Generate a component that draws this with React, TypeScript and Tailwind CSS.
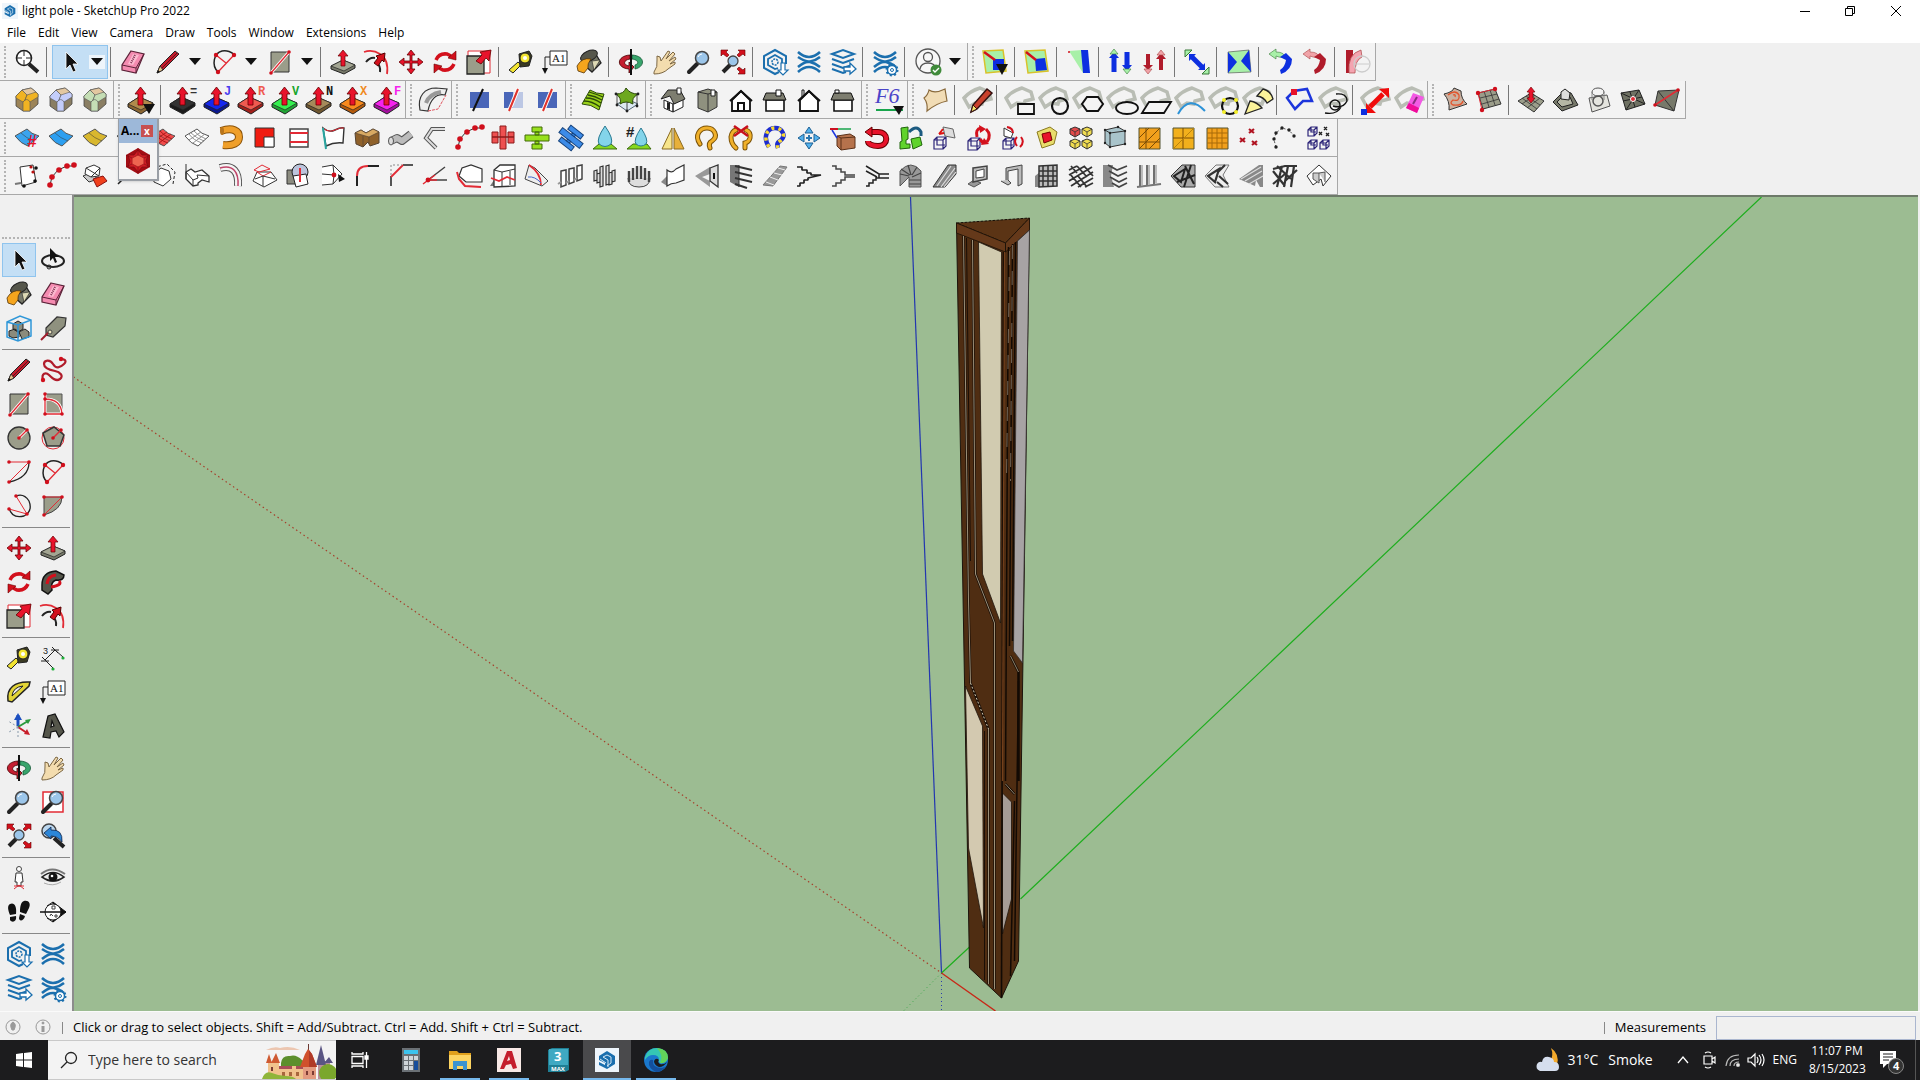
import React from "react";

type IconMap = Record<string, React.ReactNode>;

const Slab = ({ top, side, mark, markColor }: { top: string; side: string; mark?: string; markColor?: string }) => (
  <>
    <path d="M1 18 12 11 26 17 26 20 14 28 1 21Z" fill={side} stroke="#222" />
    <path d="M1 18 12 11 26 17 14 24Z" fill={top} stroke="#222" strokeWidth=".7" />
    <path d="M11 19V8H8L13.500 1 19 8H16V19Z" fill="#e8132b" stroke="#600" strokeWidth=".8" />
    {mark && (
      <text x="21" y="9" fontSize="12" fontWeight="bold" fontFamily="Liberation Mono, monospace" fill={markColor}>
        {mark}
      </text>
    )}
  </>
);

const Lens = () => (
  <>
    <path d="M12 16 4 24" stroke="#222" strokeWidth="4" strokeLinecap="round" />
    <circle cx="17" cy="10" r="6.500" fill="#9cc6ea" stroke="#444" strokeWidth="1.500" />
    <path d="M13 9q1-3 4-3" stroke="#fff" fill="none" />
  </>
);

const Bag = () => (
  <path d="M6 21 1 12Q7 5 17 2L26 6 28 13 20 15 19 18 12 17Z" fill="none" stroke="#b9bdb4" strokeWidth="3.500" />
);

const RoundedCorner = ({ cap, base }: { cap: string; base: string }) => (
  <>
    <path d="M3 10 9 4 18 2 25 8V18L17 25H10L3 20Z" fill={base} stroke="#444" strokeWidth=".8" />
    <path d="M3 10 9 4 14 9 12 14 10 16 3 12Z" fill={cap} stroke="#555" strokeWidth=".6" />
    <path d="M14 9 18 2 25 8V11L17 16 12 14Z" fill={cap} stroke="#555" strokeWidth=".6" />
    <path d="M9 4 18 2 23 6 14 9Z" fill="#e3c7a0" stroke="#555" strokeWidth=".6" />
    <path d="M10 25V16Q14 11 17 16V25Z" fill={cap} stroke="#555" strokeWidth=".6" />
  </>
);

const Sheet = ({ fill, grid }: { fill: string; grid?: string }) => (
  <>
    <path d="M2 12 14 5Q18 10 26 12L15 22Q8 20 2 12Z" fill={fill} stroke="#555" strokeWidth="1" />
    <path d="M8 9Q13 14 21 17" stroke="#333" strokeWidth=".5" fill="none" />
    {grid && <path d="M6 10Q10 16 19 19M11 7Q15 12 23 15M6 16 18 8M10 19 22 10" stroke={grid} fill="none" strokeWidth=".9" />}
  </>
);

const Stack = () => (
  <>
    <path d="M3 6 14 2 25 6 14 10ZM3 11 14 15 25 11M3 16 14 20 23 17M3 21 14 25 17 24" fill="none" stroke="#1b6fae" strokeWidth="2" />
    <path d="M15 19H21V15L27 21 21 26V23H15Z" fill="#fff" stroke="#1b6fae" strokeWidth="1.300" />
  </>
);

const Waves = () => (
  <g fill="none" stroke="#1b6fae" strokeWidth="2.600">
    <path d="M3 4Q14 14 25 4M3 9Q9 13 13 13.500H15Q20 13 25 9M3 19Q9 14 13 14H15Q20 15 25 19M3 24Q14 14 25 24" />
  </g>
);

const Gear = () => (
  <>
    <circle cx="21" cy="22" r="4.500" fill="#fff" stroke="#1b6fae" strokeWidth="1.500" />
    <circle cx="21" cy="22" r="5.500" fill="none" stroke="#1b6fae" strokeWidth="2" strokeDasharray="2 2.300" />
    <circle cx="21" cy="22" r="1.500" fill="#fff" stroke="#1b6fae" />
  </>
);

const House = ({ chimney, door, wide }: { chimney?: string; door?: boolean; wide?: boolean }) =>
  wide ? (
    <>
      <path d="M5 14H23V25H5Z" fill="#fff" stroke="#111" strokeWidth="1.600" />
      <path d="M5 7H22L25 14H2Z" fill="#7e7e70" stroke="#111" />
      {chimney && <path d={chimney} fill="#fff" stroke="#111" />}
    </>
  ) : (
    <>
      {chimney && <path d={chimney} fill="#fff" stroke="#111" />}
      <path d="M5 14 14 5 23 14V25H5Z" fill="#fff" stroke="#111" strokeWidth="1.800" />
      <path d="M3 15 14 5 25 15" fill="none" stroke="#111" strokeWidth="2" />
      {door && <path d="M10 25V16H18V25H16V18H12V25Z" fill="#111" />}
    </>
  );

const Cube = ({ x, y, s = 10 }: { x: number; y: number; s?: number }) => (
  <path
    d={`M${x} ${y + 3}h${s - 3}v${s - 3}h-${s - 3}zl3-3h${s - 3}v${s - 3}l-3 3M${x + s - 3} ${y + 3}l3-3M${x + 3} ${y}v${s - 4}h${s - 4}`}
    fill="none"
    stroke="#2b2378"
    strokeWidth="1.200"
  />
);

const Dots = ({ points, color = "#d00f1c", r = 2.2 }: { points: number[][]; color?: string; r?: number }) => (
  <>
    {points.map(([x, y]) => (
      <circle key={`${x}-${y}`} cx={x} cy={y} r={r} fill={color} />
    ))}
  </>
);

const Swap = () => (
  <>
    <path d="M5 12Q8 5 16 6L20 8M23 16Q20 23 12 22L8 20" stroke="#d3101c" strokeWidth="3.500" />
    <path d="M25 3V12L17 10ZM3 25V16L11 18Z" fill="#d3101c" stroke="#600" strokeWidth=".6" />
  </>
);

const icons: IconMap = {
  find: (
    <>
      <circle cx="11" cy="10" r="7.500" fill="#fff" stroke="#222" strokeWidth="1.600" />
      <path d="M11 2V8M11 12V18M3 10H9M13 10H19" stroke="#222" />
      <path d="M16 16 25 24" stroke="#222" strokeWidth="4" />
    </>
  ),
  select: <path d="M10 4V21L14 17 17 24 20 23 17 16H22Z" fill="#111" stroke="#fff" strokeWidth=".8" />,
  lasso: (
    <>
      <ellipse cx="14" cy="15" rx="11" ry="6" fill="none" stroke="#222" strokeWidth="2" />
      <circle cx="10" cy="21" r="2" fill="none" stroke="#222" />
      <path d="M11 2V15L14 12 16 17 18 16 16 11H20Z" fill="#111" />
    </>
  ),
  eraser: (
    <>
      <path d="M12 3 25 6 17 25 3 22 3 17Z" fill="#f48bb0" stroke="#5c2238" strokeWidth="1.200" />
      <path d="M3 17 17 20 25 6M17 20V25" stroke="#5c2238" fill="none" />
      <path d="M14 6 20 7 14 17 9 16Z" fill="#fbb9cf" />
      <path d="M16 7 12 15" stroke="#7d3250" strokeDasharray="1 1" strokeWidth="2" />
    </>
  ),
  pencil: (
    <>
      <path d="M3 25 6 18 21 3 25 6 9 22Z" fill="#c31c2c" stroke="#222" />
      <path d="M3 25 6 18 9 22Z" fill="#e8c58c" stroke="#222" strokeWidth=".8" />
      <path d="M8 20 23 5" stroke="#61101b" />
      <path d="M3 25 4 22 6 24Z" fill="#111" />
    </>
  ),
  freehand: (
    <>
      <path
        d="M4 24C2 17 7 16 10 19S17 26 21 23 21 16 16 15 5 12 5 8 11 3 14 8 21 12 25 8 24 3 22 3"
        fill="none"
        stroke="#b01c2b"
        strokeWidth="2.200"
      />
      <Dots points={[[4, 24], [22, 3]]} />
    </>
  ),
  arc: (
    <>
      <path d="M8 24C1 17 4 5 12 3 17 2 22 4 24 7" fill="none" stroke="#222" strokeWidth="1.500" />
      <path d="M8 24 24 7M6 7 16 15" stroke="#e22b35" strokeWidth="1.300" />
      <Dots points={[[8, 24], [24, 7], [6, 7]]} />
    </>
  ),
  rect: (
    <>
      <path d="M5 4H23V24H5Z" fill="#9b9d8a" stroke="#333" />
      <path d="M5 25 23 4" stroke="#fff" strokeWidth="3" />
      <path d="M5 25 23 4" stroke="#e22b35" strokeWidth="1.300" />
      <Dots points={[[5, 25], [23, 4]]} r={1.8} />
    </>
  ),
  rotrect: (
    <>
      <path d="M6 4H23V24H6Z" fill="#9b9d8a" stroke="#555" />
      <path d="M6 4V24H23Q22 9 6 9" fill="none" stroke="#fff" strokeWidth="3" />
      <path d="M6 4V24H23Q22 9 6 9" fill="none" stroke="#e22b35" strokeWidth="1.300" />
      <Dots points={[[6, 4], [6, 9], [6, 24], [23, 24]]} r={1.8} />
    </>
  ),
  circle: (
    <>
      <circle cx="14" cy="14" r="11" fill="#9b9d8a" stroke="#333" strokeWidth="1.300" />
      <path d="M14 14 22 6" stroke="#fff" strokeWidth="3" />
      <path d="M14 14 22 6" stroke="#e22b35" strokeWidth="1.300" />
      <Dots points={[[14, 14], [22, 6]]} r={1.8} />
    </>
  ),
  polygon: (
    <>
      <circle cx="14" cy="14" r="11" fill="none" stroke="#e22b35" />
      <path d="M4 9 15 3 25 11 21 22 8 22Z" fill="#9b9d8a" stroke="#333" strokeWidth="1.500" />
      <path d="M14 14 22 6" stroke="#e22b35" strokeWidth="1.500" />
      <Dots points={[[14, 14], [22, 6]]} r={1.8} />
    </>
  ),
  arc2: (
    <>
      <path d="M4 24Q24 20 24 4" fill="none" stroke="#222" strokeWidth="1.300" />
      <path d="M4 24 24 4H4" fill="none" stroke="#e22b35" />
      <Dots points={[[4, 24], [24, 4], [4, 4]]} r={1.8} />
    </>
  ),
  arc3: (
    <>
      <path d="M4 16Q7 27 19 24 28 19 24 9 19 1 11 4" fill="none" stroke="#222" strokeWidth="1.300" />
      <path d="M11 4 22 22 4 17" fill="none" stroke="#e22b35" />
      <Dots points={[[11, 4], [22, 22], [4, 17]]} r={1.8} />
    </>
  ),
  pie: (
    <>
      <path d="M5 5H23Q23 18 5 23Z" fill="#9b9d8a" stroke="#444" />
      <path d="M5 23 23 5H5" fill="none" stroke="#e22b35" />
      <Dots points={[[5, 23], [23, 5], [5, 5]]} r={1.8} />
    </>
  ),
  pushpull: (
    <>
      <path d="M2 18 14 12 26 17V20L15 26 2 21Z" fill="#77796a" stroke="#222" />
      <path d="M2 18 14 12 26 17 15 23Z" fill="#a3a592" stroke="#222" strokeWidth=".7" />
      <path d="M12 18V8H9L14 2 19 8H16V18Z" fill="#e8132b" stroke="#600" strokeWidth=".7" />
    </>
  ),
  offset: (
    <>
      <path d="M1 4C10 1 27 5 24 26" stroke="#e22b35" strokeWidth="1.800" />
      <path d="M3 14Q7 9 12 10M13 14Q18 18 17 24" stroke="#222" strokeWidth="2" />
      <path d="M11 15 15 10 13 8 22 5 21 14 19 12 15 18Z" fill="#d3101c" stroke="#500" />
    </>
  ),
  move: (
    <path
      d="M14 2 18 7H15V13H21V10L26 14 21 18V15H15V21H18L14 26 10 21H13V15H7V18L2 14 7 10V13H13V7H10Z"
      fill="#e8132b"
      stroke="#600"
      strokeWidth=".8"
    />
  ),
  rotate: <Swap />,
  followme: (
    <>
      <path d="M3 17Q3 4 17 3L25 7Q25 13 17 12 11 14 13 22L9 26 3 22Z" fill="#55564b" stroke="#111" strokeWidth="1.500" />
      <path d="M8 16Q9 8 17 7M12 19Q24 17 20 13" fill="none" stroke="#d3101c" strokeWidth="3" />
    </>
  ),
  scale: (
    <>
      <path d="M3 3H25V25H3Z" fill="#fff" stroke="#e22b35" />
      <path d="M2 8H19V26H2Z" fill="#9b9d8a" stroke="#222" strokeWidth="1.300" />
      <path d="M11 13 17 7 15 4 26 2 24 13 21 10 16 16Z" fill="#e8132b" stroke="#600" strokeWidth=".8" />
    </>
  ),
  tape: (
    <>
      <path d="M2 22 11 14 14 17 6 25Z" fill="#f2e432" stroke="#222" />
      <path d="M12 6 22 3 25 8 22 18 13 19Z" fill="#3a3a22" stroke="#222" />
      <circle cx="18" cy="10" r="5" fill="#f2e432" stroke="#222" />
      <circle cx="18" cy="10" r="2" fill="#fff" />
    </>
  ),
  text: (
    <>
      <path d="M9 3H26V17H9Z" fill="#fff" stroke="#222" />
      <path d="M9 9H4V21" fill="none" stroke="#222" />
      <path d="M1 20H7L4 26Z" fill="#111" />
      <text x="11" y="14" fontSize="11" fontFamily="Liberation Serif, serif" fill="#111">A1</text>
    </>
  ),
  dimension: (
    <>
      <path d="M6 16 16 6M6 16 14 24M16 6 24 13M3 13 9 19M13 3 19 9M2 17H10M12 6H20" stroke="#222" />
      <Dots points={[[14, 25], [24, 14]]} color="#1fae3a" r={1.6} />
      <text x="4" y="10" fontSize="9" fontFamily="Liberation Sans, sans-serif" fill="#222">3</text>
    </>
  ),
  paint: (
    <>
      <path d="M8 7 19 3 26 15 17 24 8 16Z" fill="#77796a" stroke="#222" strokeWidth="1.300" />
      <ellipse cx="14" cy="8" rx="9" ry="5" transform="rotate(-25 14 8)" fill="#55564b" stroke="#222" />
      <path d="M17 13 25 12 19 22Z" fill="#ddd9b4" stroke="#222" strokeWidth=".6" />
      <path d="M2 18Q7 9 16 11 12 16 13 20L9 25 3 23Z" fill="#f5a51d" stroke="#54350a" strokeWidth=".8" />
    </>
  ),
  orbit: (
    <>
      <path d="M13 7C-1 8-1 20 12 21V25L17 19 12 14V18C6 17 6 12 13 11Z" fill="#c41e30" stroke="#400" strokeWidth=".8" />
      <path d="M15 7C29 8 28 19 18 21V17C22 16 22 12 15 11Z" fill="#38a56c" stroke="#153" strokeWidth=".8" />
      <path d="M14 1V27" stroke="#111" strokeWidth="2" />
    </>
  ),
  pan: (
    <path
      d="M3 24Q7 19 6 12L6 8 9 9 10 13 17 3 19 4 15 11 22 4 24 6 18 13 24 9 25 11 19 16 24 14V16L17 21Q12 26 3 26Z"
      fill="#f3dcae"
      stroke="#7c6743"
    />
  ),
  zoom: <Lens />,
  zoomwin: (
    <>
      <path d="M4 4H24V24H4Z" fill="#fff" stroke="#e22b35" strokeWidth="1.500" />
      <Lens />
    </>
  ),
  zoomext: (
    <>
      <path d="M11 17 4 24" stroke="#222" strokeWidth="4" />
      <circle cx="14" cy="13" r="5" fill="#9cc6ea" stroke="#444" strokeWidth="1.300" />
      <path d="M2 2H9L7 4 10 7 8 9 4 6 2 8ZM26 2H19L21 4 18 7 20 9 24 6 26 8ZM26 26H19L21 24 18 21 20 19 24 22 26 20Z" fill="#d3101c" stroke="#600" strokeWidth=".6" />
    </>
  ),
  previous: (
    <>
      <circle cx="10" cy="9" r="7" fill="#bcd7ee" stroke="#444" strokeWidth="1.500" />
      <path d="M15 16 25 25" stroke="#222" strokeWidth="4" />
      <path d="M5 11 12 5V8Q24 7 23 20 19 14 12 14V17Z" fill="#2c86d8" stroke="#124" strokeWidth=".8" />
    </>
  ),
  warehouse: (
    <>
      <path d="M18 24 14 26 3 20V8L14 2 25 8V16" fill="none" stroke="#1b6fae" strokeWidth="2" />
      <path d="M17 20 14 21 7 17V11L14 7 21 11V15" fill="none" stroke="#1b6fae" strokeWidth="1.800" />
      <circle cx="14" cy="14" r="3" fill="none" stroke="#1b6fae" strokeWidth="1.500" strokeDasharray="2 1" />
      <path d="M20 15H24V22H27L22 27 17 22H20Z" fill="#fff" stroke="#1b6fae" strokeWidth="1.200" />
    </>
  ),
  waves: <Waves />,
  stack: <Stack />,
  wavesGear: (
    <>
      <Waves />
      <Gear />
    </>
  ),
  account: (
    <>
      <circle cx="14" cy="13" r="12" fill="#f8f8f8" stroke="#555" strokeWidth="1.300" />
      <circle cx="14" cy="9" r="4.500" fill="none" stroke="#555" strokeWidth="1.300" />
      <path d="M6 21Q7 15 14 15T22 21" fill="none" stroke="#555" strokeWidth="1.300" />
      <circle cx="22" cy="22" r="5.500" fill="#3f8a3a" />
      <path d="M19 22 21 24 25 20" stroke="#fff" fill="none" strokeWidth="1.400" />
    </>
  ),
  fredo1: (
    <>
      <path d="M2 3 22 2 25 23 5 25Z" fill="#a8f0a8" stroke="#d8c22a" strokeWidth="1.500" />
      <path d="M12 11H23V22H12Z" fill="#0d2fe0" />
      <path d="M3 4 14 12" stroke="#d3101c" strokeWidth="2.500" />
      <path d="M15 16H27L21 27Z" fill="#111" />
    </>
  ),
  fredo2: (
    <>
      <path d="M2 3 22 2 25 23 5 25Z" fill="#a8f0a8" stroke="#d8c22a" strokeWidth="1.500" />
      <path d="M12 11 22 10 24 22 13 23Z" fill="#0d2fe0" />
      <path d="M3 4 13 12" stroke="#d3101c" strokeWidth="2.500" />
    </>
  ),
  fredo3: (
    <>
      <path d="M4 3 17 2 18 25Z" fill="#a8f0a8" />
      <path d="M16 2H23L25 25H18Z" fill="#0d2fe0" />
      <circle cx="4" cy="4" r="1" fill="#d3101c" />
    </>
  ),
  fredo4: (
    <>
      <path d="M7 10V24M20 4V18" stroke="#0d2fe0" strokeWidth="5" />
      <path d="M2 10 7 4 12 10ZM15 17 20 23 25 17Z" fill="#0d2fe0" />
      <path d="M3 6 7 1 11 6ZM16 21 20 26 24 21Z" fill="#a8f0a8" stroke="#387838" strokeWidth=".6" />
    </>
  ),
  fredo5: (
    <>
      <path d="M7 6V18M20 10V22" stroke="#b01c2b" strokeWidth="4" />
      <path d="M2 17 7 22 12 17ZM15 11 20 5 25 11Z" fill="#b01c2b" />
      <path d="M3 21 7 26 11 21ZM16 7 20 2 24 7Z" fill="#f0a3a8" stroke="#a44" strokeWidth=".6" />
    </>
  ),
  fredo6: (
    <>
      <path d="M8 8 20 20" stroke="#0d2fe0" strokeWidth="5" />
      <path d="M2 2H9L2 9ZM26 26H19L26 19Z" fill="#a8f0a8" stroke="#387838" />
      <path d="M6 6H13L6 13ZM22 22H15L22 15Z" fill="#0d2fe0" />
    </>
  ),
  fredo7: (
    <>
      <path d="M3 4 24 2 26 24 3 25Z" fill="#a8f0a8" stroke="#444" strokeWidth=".6" />
      <path d="M3 4 12 14 3 25ZM24 2 16 13 26 24Z" fill="#0d2fe0" />
    </>
  ),
  fredo8: (
    <>
      <path d="M2 6 9 1V4Q18 4 18 10L12 9 9 8V11Z" fill="#a8f0a8" stroke="#387838" strokeWidth=".6" />
      <path d="M13 9 19 5 25 11Q25 22 14 26L13 22Q18 19 19 12Z" fill="#0d2fe0" />
    </>
  ),
  fredo9: (
    <>
      <path d="M2 6 9 1V4Q18 4 18 10L12 9 9 8V11Z" fill="#f0a3a8" stroke="#a44" strokeWidth=".6" />
      <path d="M13 9 19 5 25 11Q25 22 14 26L13 22Q18 19 19 12Z" fill="#b01c2b" />
    </>
  ),
  fredo10: (
    <>
      <path d="M3 2H10V25H3Z" fill="#b01c2b" />
      <path d="M6 25Q4 6 18 2L19 9Q12 12 12 25Z" fill="#f4a4b0" stroke="#a44" strokeWidth=".7" />
      <circle cx="19" cy="16" r="8" fill="none" stroke="#ccc" strokeWidth="1.300" />
      <path d="M12 16H26" stroke="#ccc" />
    </>
  ),
  cornerGold: <RoundedCorner cap="#f0b323" base="#9c8458" />,
  cornerBlue: <RoundedCorner cap="#c4cdfa" base="#8a7e63" />,
  cornerGreen: <RoundedCorner cap="#c5deb5" base="#8a7e63" />,
  jpp: (
    <>
      <Slab top="#b08a4c" side="#8a6633" />
      <path d="M16 18H28L22 28Z" fill="#111" />
    </>
  ),
  jppE: <Slab top="#333" side="#1b1b1b" mark="=" markColor="#333" />,
  jppJ: <Slab top="#1527f0" side="#0b1890" mark="J" markColor="#4a3ff0" />,
  jppR: <Slab top="#ef5a50" side="#a3201a" mark="R" markColor="#ef5a50" />,
  jppV: <Slab top="#35f050" side="#21a535" mark="V" markColor="#18a52c" />,
  jppN: <Slab top="#a58a5a" side="#6f5730" mark="N" markColor="#111" />,
  jppX: <Slab top="#f98a1d" side="#b55a0b" mark="X" markColor="#f08a1d" />,
  jppF: <Slab top="#f622ee" side="#a40f9f" mark="F" markColor="#f622ee" />,
  shell: (
    <>
      <path d="M1 24C-2 10 6 2 17 2L28 3 26 9C17 7 11 14 9 25Z" fill="#eee" stroke="#333" strokeWidth="1.200" />
      <path d="M7 17Q10 8 22 6" stroke="#999" fill="none" strokeWidth="4" />
      <path d="M9 25 19 23 27 9" stroke="#e0555f" fill="none" strokeDasharray="3 1" />
    </>
  ),
  mirror1: (
    <>
      <path d="M5 6H24V22H5Z" fill="#4a66b8" />
      <path d="M8 25 18 3" stroke="#111" strokeWidth="2" />
    </>
  ),
  mirror2: (
    <>
      <path d="M5 6H14V22H5Z" fill="#4a66b8" />
      <path d="M14 6H24V22H14Z" fill="#bcc7e4" />
      <path d="M10 25 19 3" stroke="#fff" strokeWidth="4" />
      <path d="M10 25 19 3" stroke="#e0322c" strokeWidth="2" />
    </>
  ),
  mirror3: (
    <>
      <path d="M5 6H24V22H5Z" fill="#4a66b8" />
      <path d="M10 25 19 3" stroke="#fff" strokeWidth="4" />
      <path d="M10 25 19 3" stroke="#e0322c" strokeWidth="2" />
    </>
  ),
  curviloft: (
    <>
      <path d="M3 18 11 4Q17 8 25 8L20 24Q12 18 3 18Z" fill="#9ad21a" stroke="#2b4a08" />
      <path d="M5 15Q13 15 21 21M7 12Q15 12 22 17M9 9Q16 10 23 14M10 6Q17 8 24 11" stroke="#2b4a08" strokeWidth="1.300" fill="none" />
    </>
  ),
  skinning: (
    <>
      <path d="M4 18 14 25 25 18 14 13Z" fill="#dce9f2" stroke="#567" />
      <path d="M3 8Q11 8 13 2 17 8 25 8 18 12 20 18 13 14 7 18 9 12 3 8Z" fill="#6da81e" stroke="#2b4a08" />
      <path d="M4 8V19M24 8V20M14 16V25" stroke="#222" strokeWidth=".8" />
      <Dots points={[[4, 19], [24, 20], [14, 25], [3, 8], [25, 8]]} color="#222" r={1.4} />
    </>
  ),
  iso: (
    <>
      <path d="M5 14 14 18V26L5 22ZM14 18 24 13V21L14 26Z" fill="#fff" stroke="#222" />
      <path d="M2 13 9 4 21 4 26 13 15 18 11 10Z" fill="#7e7e70" stroke="#222" />
      <path d="M18 2H22V8H18Z" fill="#fff" stroke="#222" />
      <path d="M8 16 11 17V24L8 23Z" fill="#222" />
    </>
  ),
  top: (
    <>
      <path d="M5 6 15 3 24 6V21L15 26 5 22Z" fill="#8f917f" stroke="#333" />
      <path d="M5 6 15 8V26M15 8 24 6" stroke="#333" fill="none" />
      <path d="M18 4H22V10H18Z" fill="#fff" stroke="#222" />
    </>
  ),
  front: <House door />,
  right: <House wide chimney="M15 4H20V10H15Z" />,
  back: <House chimney="M7 4H9V12H7Z" />,
  left: <House wide chimney="M6 4H10V7H6Z" />,
  f6: (
    <>
      <text x="0" y="17" fontSize="22" fontStyle="italic" fontFamily="Liberation Serif, serif" fill="#4a44c8">F6</text>
      <path d="M1 24H28" stroke="#18a54c" strokeWidth="2" />
      <path d="M18 20H29L24 29Z" fill="#111" />
    </>
  ),
  skin: <path d="M3 12Q7 9 8 4 14 8 24 3L26 15Q16 17 6 25 7 17 3 12Z" fill="#f1dcb5" stroke="#8a6a3c" strokeWidth="1.200" />,
  bagPencil: (
    <>
      <Bag />
      <path d="M8 26 10 19 24 3 29 7 14 23Z" fill="#c9402c" stroke="#311" strokeWidth="1.500" />
      <path d="M8 26 10 19 14 23Z" fill="#fbe46b" stroke="#311" />
    </>
  ),
  bagRect: (<><Bag /><path d="M13 18H29V28H13Z" fill="#f4f4f4" stroke="#111" strokeWidth="1.800" /></>),
  bagCircle: (<><Bag /><circle cx="21" cy="20" r="8" fill="none" stroke="#111" strokeWidth="2.200" /></>),
  bagHex: (<><Bag /><path d="M14 11H25L30 18 25 25H14L9 18Z" fill="#f4f4f4" stroke="#111" strokeWidth="2" /></>),
  bagEllipse: (<><Bag /><ellipse cx="20" cy="22" rx="11" ry="6" fill="#f4f4f4" stroke="#111" strokeWidth="1.800" /></>),
  bagPara: (<><Bag /><path d="M8 16H30L23 27H1Z" fill="#f4f4f4" stroke="#111" strokeWidth="1.800" /></>),
  bagArc: (<><Bag /><path d="M3 28Q14 8 30 25" fill="none" stroke="#2d93d8" strokeWidth="2" /></>),
  bagCircle2: (
    <>
      <Bag />
      <circle cx="21" cy="20" r="8" fill="none" stroke="#111" strokeWidth="2.200" />
      <Dots points={[[15, 14], [27, 14], [15, 26], [27, 26]]} color="#f5f02a" r={2} />
    </>
  ),
  bagPie: (
    <>
      <Bag />
      <path d="M2 28 7 15Q14 16 19 22ZM14 10 20 3Q28 5 30 13L24 17Q21 11 14 10Z" fill="#fbf39a" stroke="#222" strokeWidth="1.300" />
    </>
  ),
  bagBlue: (
    <>
      <path d="M2 12 9 5 22 3 27 15 18 15 10 23Z" fill="none" stroke="#1c35dc" strokeWidth="2.500" />
      <path d="M6 3H12V9H6Z" fill="#e8132b" />
    </>
  ),
  bagLoops: (
    <>
      <Bag />
      <circle cx="16" cy="19" r="5" fill="none" stroke="#111" strokeWidth="1.400" />
      <path d="M17 8Q28 7 28 15 24 23 14 20M6 27Q18 29 22 21" fill="none" stroke="#111" strokeWidth="1.400" />
    </>
  ),
  bagArrow: (
    <>
      <Bag />
      <path d="M9 21 22 8" stroke="#f00c0c" strokeWidth="5" />
      <path d="M5 27V17L15 27ZM28 2V12L18 3Z" fill="#f00c0c" />
      <path d="M0 23H6V29H0Z" fill="#0d2fe0" />
    </>
  ),
  bagErase: (
    <>
      <Bag />
      <path d="M18 7 29 11 22 27 11 22Z" fill="#f35ae4" />
      <path d="M14 17 24 22 22 27 11 22Z" fill="#f00c98" />
      <path d="M22 11 18 18" stroke="#8a2c80" strokeWidth="2" />
    </>
  ),
  contours: (
    <>
      <path d="M3 8Q12 6 13 2L20 5Q20 13 26 18L8 24Q9 15 3 8Z" fill="#cbb1a0" stroke="#333" />
      <path d="M7 9Q14 3 18 9 19 16 12 14 8 17 12 19 21 20 22 15M12 9Q15 8 14 11" fill="none" stroke="#e2542c" strokeWidth="1.300" />
    </>
  ),
  scratch: (
    <>
      <path d="M3 7 20 3 26 18 8 23Z" fill="#9b9d8a" stroke="#333" />
      <path d="M5 12 22 8M7 18 24 13M9 5 14 21M15 4 20 19" stroke="#333" strokeWidth=".8" />
      <path d="M20 3 3 7 7 24" stroke="#e22b35" fill="none" />
      <Dots points={[[3, 7], [20, 3], [7, 24]]} />
    </>
  ),
  smoove: (
    <>
      <path d="M1 15 14 7 27 15 17 26Z" fill="#9b9d8a" stroke="#333" />
      <path d="M5 12 20 23M9 10 23 19M5 18 18 9M10 22 23 12" stroke="#333" strokeWidth=".8" />
      <path d="M14 1 18 6H16V12H18L14 17 10 12H12V6H10Z" fill="#e8132b" stroke="#600" strokeWidth=".6" />
    </>
  ),
  stamp: (
    <>
      <path d="M2 16 13 5 20 7 27 19 11 25Z" fill="#77796a" stroke="#222" />
      <path d="M6 16 13 9 19 11 22 18 11 21Z" fill="#b5b7a5" stroke="#222" />
      <path d="M10 6 14 3 19 7 18 14 10 13Z" fill="#ddd" stroke="#222" />
    </>
  ),
  drape: (
    <>
      <path d="M4 12 22 9 25 20 7 26Z" fill="#e4e4de" stroke="#555" />
      <ellipse cx="13" cy="6" rx="6" ry="4" fill="none" stroke="#555" />
      <circle cx="13" cy="15" r="5" fill="none" stroke="#555" strokeWidth="1.500" />
      <path d="M7 6V14M19 6V14" stroke="#888" />
    </>
  ),
  detail: (
    <>
      <path d="M2 7 20 4 26 18 7 24Z" fill="#6f7163" stroke="#222" />
      <path d="M2 7 26 18M20 4 7 24M11 6 16 21M4 15 23 11" stroke="#222" />
      <circle cx="14" cy="13" r="2.500" fill="#e22b35" stroke="#fff" />
    </>
  ),
  flip: (
    <>
      <path d="M5 5 26 4 21 25 2 19Z" fill="#77796a" stroke="#333" />
      <path d="M5 5 21 25" stroke="#333" />
      <path d="M2 19 25 4" stroke="#e22b35" strokeWidth="1.500" />
      <Dots points={[[2, 19], [25, 4]]} r={1.8} />
    </>
  ),
  sheetHash: (
    <>
      <Sheet fill="#3ba4ee" />
      <text x="14" y="23" fontSize="17" fontWeight="bold" fontStyle="italic" fontFamily="Liberation Sans, sans-serif" fill="#e8132b">#</text>
    </>
  ),
  sheetBlue: <Sheet fill="#2d9ff0" />,
  sheetGold: <Sheet fill="#d8b72e" />,
  sheetRed: <Sheet fill="#f04c4c" grid="#a11" />,
  sheetWhite: <Sheet fill="#fff" grid="#888" />,
  pipeGold: (
    <>
      <path d="M4 7C16 3 22 7 22 13S16 22 6 21" fill="none" stroke="#8a5208" strokeWidth="8" />
      <path d="M4 7C16 3 22 7 22 13S16 22 6 21" fill="none" stroke="#ef9f2a" strokeWidth="6" />
      <ellipse cx="5" cy="7" rx="2" ry="4" fill="#b8751c" />
    </>
  ),
  quad: (
    <>
      <path d="M4 4H23V23H4Z" fill="#f01c10" stroke="#333" />
      <path d="M13 13H23V23H13Z" fill="#fff" stroke="#333" />
    </>
  ),
  stripes: (
    <>
      <path d="M5 5H23V23H5Z" fill="#fff" stroke="#444" strokeWidth="1.500" />
      <path d="M5 9H23M5 18H23" stroke="#e22b35" strokeWidth="2" />
    </>
  ),
  flag: (
    <>
      <path d="M4 4Q10 9 16 6T25 4L24 19Q15 18 7 22Z" fill="#fff" stroke="#333" strokeWidth="1.400" />
      <path d="M4 4Q10 9 16 6T25 4" stroke="#e22b35" />
      <path d="M4 4 7 25" stroke="#29a5a0" strokeWidth="2" />
    </>
  ),
  woodL: (
    <>
      <path d="M2 9 8 6 13 9 20 5 26 8V19L17 22 15 18 10 23 3 20Z" fill="#8f612a" stroke="#543" />
      <path d="M2 9 8 6 13 9 20 5 26 8 16 13 9 11Z" fill="#d8a962" stroke="#543" strokeWidth=".7" />
      <path d="M10 12V23M16 13V20" stroke="#543" strokeWidth=".7" />
    </>
  ),
  tubeGrey: (
    <>
      <path d="M4 17 10 14 15 17 24 10" fill="none" stroke="#555" strokeWidth="8" strokeLinejoin="round" />
      <path d="M4 17 10 14 15 17 24 10" fill="none" stroke="#bbb" strokeWidth="6" strokeLinejoin="round" />
      <ellipse cx="4" cy="17" rx="2.500" ry="4" fill="#ddd" stroke="#555" />
    </>
  ),
  channel: (
    <>
      <path d="M24 5H11L5 14 15 24" fill="none" stroke="#555" strokeWidth="4" />
      <path d="M24 5H11L5 14 15 24" fill="none" stroke="#ddd" strokeWidth="2" />
    </>
  ),
  arcDots: (
    <>
      <path d="M3 23 5 15 11 8 20 4 26 4" fill="none" stroke="#333" />
      <Dots points={[[3, 23], [5, 15], [12, 8], [20, 4], [27, 3]]} r={2.8} />
    </>
  ),
  crossRed: (
    <>
      <path d="M11 2H17V25H11Z" fill="#ee5050" stroke="#8c1a1a" />
      <path d="M3 8H9V19H3ZM19 8H25V19H19Z" fill="#ee5050" stroke="#8c1a1a" />
      <path d="M3 13H25" stroke="#8c1a1a" strokeWidth="1.500" />
    </>
  ),
  crossGreen: <path d="M9 3H19V8H9ZM9 20H19V25H9ZM2 11H26V17H2ZM12 8H16V11H12ZM12 17H16V20H12Z" fill="#98e01e" stroke="#426a08" />,
  crossBlue: (
    <g transform="rotate(38 14 14)" fill="#3c8be8" stroke="#15427c">
      <path d="M6 4H22V9H6ZM1 11H27V17H1ZM6 19H22V24H6Z" />
      <path d="M12 9H16V11H12ZM12 17H16V19H12Z" />
    </g>
  ),
  drop: (
    <>
      <path d="M2 25 8 20H20L26 25Z" fill="#86d820" stroke="#3d6a0c" />
      <path d="M14 2Q23 15 20 20 14 25 8 20 5 15 14 2Z" fill="#83d4ea" stroke="#2a7a92" />
    </>
  ),
  dropHash: (
    <>
      <path d="M2 25 8 20H22L26 25Z" fill="#86d820" stroke="#3d6a0c" />
      <path d="M16 4Q24 16 21 20 16 24 11 20 8 16 16 4Z" fill="#83d4ea" stroke="#2a7a92" />
      <text x="1" y="13" fontSize="15" fontWeight="bold" fontFamily="Liberation Sans, sans-serif" fill="#222">#</text>
    </>
  ),
  pyramids: (
    <>
      <path d="M3 25 13 4V25Z" fill="#f7e48a" stroke="#8a6a20" />
      <path d="M15 4V25H25Z" fill="#e8b03a" stroke="#8a6a20" />
    </>
  ),
  loop: (
    <>
      <path d="M7 20C1 11 7 4 14 4S26 12 19 17Q15 19 17 24" fill="none" stroke="#7a5208" strokeWidth="5" strokeLinecap="round" />
      <path d="M7 20C1 11 7 4 14 4S26 12 19 17Q15 19 17 24" fill="none" stroke="#f0b02a" strokeWidth="3" strokeLinecap="round" />
    </>
  ),
  loopX: (
    <>
      <path d="M9 24Q4 20 4 13 5 7 9 6M19 6Q24 8 23 14 22 18 18 19V24" fill="none" stroke="#7a5208" strokeWidth="5" strokeLinecap="round" />
      <path d="M9 24Q4 20 4 13 5 7 9 6M19 6Q24 8 23 14 22 18 18 19V24" fill="none" stroke="#f0b02a" strokeWidth="3" strokeLinecap="round" />
      <path d="M7 2 21 12M21 2 7 12" stroke="#c8101c" strokeWidth="2.500" />
    </>
  ),
  loopBlue: (
    <>
      <path d="M8 23C1 12 7 4 14 4S26 12 19 17Q15 19 17 24" fill="none" stroke="#1c2ccf" strokeWidth="4.500" />
      <path d="M8 23C1 12 7 4 14 4S26 12 19 17Q15 19 17 24" fill="none" stroke="#f8d832" strokeWidth="3.500" strokeDasharray="3 4" />
    </>
  ),
  moveBlue: (
    <>
      <path d="M14 3 18 9H10ZM14 25 18 19H10ZM3 14 9 10V18ZM25 14 19 10V18Z" fill="#52b2ee" stroke="#1d5f92" />
      <path d="M14 11V17M11 14H17" stroke="#2b78b0" strokeWidth="2" />
    </>
  ),
  woodBox: (
    <>
      <path d="M8 12 21 10 26 13V24L12 26 8 22Z" fill="#b5724c" stroke="#5a3018" />
      <path d="M8 12 12 14 26 13M12 14V26" stroke="#5a3018" fill="none" />
      <path d="M3 6 8 14" stroke="#1c35dc" strokeWidth="1.500" />
      <path d="M8 5H22" stroke="#18a54c" strokeWidth="1.500" />
      <path d="M1 5H9" stroke="#c12" strokeWidth="2" />
    </>
  ),
  hook: (
    <>
      <path d="M8 8H15C26 8 26 22 15 22 9 22 5 20 5 17" fill="none" stroke="#600" strokeWidth="6" />
      <path d="M8 8H15C26 8 26 22 15 22 9 22 5 20 5 17" fill="none" stroke="#e8132b" strokeWidth="4" />
      <path d="M9 3V13L2 8Z" fill="#e8132b" stroke="#600" />
    </>
  ),
  greenBoxes: (
    <>
      <path d="M4 4 11 3V15L9 16V20H13V24L3 25V18L5 17Z" fill="#5fd32c" stroke="#20640c" />
      <path d="M14 15 23 13 25 21 16 25Z" fill="#5fd32c" stroke="#20640c" />
      <path d="M12 8Q20 0 24 8V12" fill="none" stroke="#1b5a80" strokeWidth="3" />
    </>
  ),
  cubePaste: (<><Cube x={3} y={13} s={12} /><path d="M12 3 22 5 24 14 14 12Z" fill="#ddd" stroke="#666" /><path d="M8 10 12 5M8 10 13 9" stroke="#d11" strokeWidth="2" /></>),
  cubeRotate: (
    <>
      <Cube x={3} y={14} s={12} />
      <path d="M12 13Q10 5 16 4M22 18Q27 11 21 5M18 19 15 15" fill="none" stroke="#d3101c" strokeWidth="3" />
      <path d="M14 1 21 5 15 9ZM24 20 16 21 19 14Z" fill="#d3101c" />
    </>
  ),
  cubeRotate2: (
    <>
      <Cube x={4} y={14} s={11} />
      <path d="M5 4 14 9 12 14 5 12Z" fill="#fff" stroke="#333" />
      <path d="M8 3Q14 4 14 9M18 13Q14 17 18 22M22 13Q26 18 21 23" fill="none" stroke="#d3101c" strokeWidth="2" />
    </>
  ),
  goldBlock: (
    <>
      <path d="M4 8 17 3 24 8 21 20 9 24Z" fill="#e8dc6c" stroke="#8a7a20" />
      <path d="M9 10 17 8 19 16 11 19Z" fill="#e8132b" stroke="#700" />
    </>
  ),
  fourCubes: (
    <>
      {[[8, 8], [20, 8], [8, 20], [20, 20]].map(([x, y], i) => (
        <g key={i}>
          <path d={`M${x} ${y - 5}l5 2v5l-5 3l-5-3v-5z`} fill={i === 0 ? "#e24a4a" : "#f0dc50"} stroke="#333" />
          <path d={`M${x - 5} ${y - 3}l5 3l5-3M${x} ${y}v5`} stroke="#333" fill="none" strokeWidth=".8" />
        </g>
      ))}
    </>
  ),
  glass: (
    <>
      <path d="M4 6 17 3 24 7V20L9 23 4 19Z" fill="#a9c4cb" stroke="#333" />
      <path d="M4 6 9 9 24 7M9 9V23" fill="none" stroke="#333" />
      <Dots points={[[4, 6], [17, 3], [24, 7], [24, 20], [9, 23], [4, 19], [9, 9]]} color="#222" r={1.2} />
    </>
  ),
  tileDiag: (<><path d="M4 4H25V25H4Z" fill="#f2a01c" stroke="#553" /><path d="M4 14 14 4M4 25 25 4M14 25 25 14M4 18H25M11 4V25" stroke="#7a4c04" /></>),
  tile4: (<><path d="M4 4H25V25H4Z" fill="#f2b01c" stroke="#553" /><path d="M14 4V25M4 14H25" stroke="#7a4c04" /><path d="M4 25 25 4" stroke="#b8820c" /></>),
  tileGrid: (<><path d="M4 4H25V25H4Z" fill="#f2a01c" stroke="#553" /><path d="M9 4V25M14 4V25M19 4V25M4 9H25M4 14H25M4 19H25" stroke="#a86a08" /></>),
  crosses: <path d="M12 5 17 9M17 5 12 9M3 14 8 18M8 14 3 18M15 17 20 21M20 17 15 21" stroke="#b01220" strokeWidth="2.200" />,
  arcSquares: (
    <>
      <path d="M5 23 3 16 5 9 11 4 18 6 23 12" fill="none" stroke="#555" strokeDasharray="2 2" />
      <Dots points={[[5, 23], [3, 15], [5, 9], [11, 4], [18, 6], [23, 12]]} color="#222" r={1.7} />
    </>
  ),
  cubes3: (
    <>
      <Cube x={3} y={3} s={9} />
      <Cube x={3} y={16} s={9} />
      <Cube x={15} y={16} s={9} />
      <path d="M19 3 22 6M22 3 19 6M14 8 17 11M17 8 14 11M21 9 24 12M24 9 21 12" stroke="#222" strokeWidth="1.400" />
    </>
  ),
  paper: (
    <>
      <path d="M7 5 20 3 23 20 9 24Z" fill="#fff" stroke="#333" />
      <path d="M2 22 8 21" stroke="#777" strokeWidth="2" />
      <Dots points={[[18, 5], [20, 10]]} color="#b11" r={1.6} />
      <Dots points={[[11, 24], [22, 19], [23, 6]]} color="#111" r={1.8} />
    </>
  ),
  boxRed: (
    <>
      <path d="M2 14 9 11 17 17 8 20Z" fill="#ccc" stroke="#333" />
      <path d="M5 6 13 3 19 6 18 14 10 15 4 12ZM5 6 18 14M19 6 10 15" fill="#fff" stroke="#333" />
      <path d="M12 17 22 14 26 19 16 25Z" fill="#f0401c" stroke="#811" />
    </>
  ),
  lineOnly: <path d="M3 22 14 11 25 8" stroke="#222" strokeWidth="1.500" fill="none" />,
  hexDash: (<><path d="M4 12 12 6 20 9 22 17 14 24 5 20Z" fill="#fff" stroke="#333" /><path d="M4 6 18 2 26 10 24 22" fill="none" stroke="#222" strokeDasharray="3 2" /></>),
  slabArrow: (<><path d="M3 10 8 7 12 10 19 8 26 14V20L19 18 15 21V23L10 24 3 17Z" fill="#fff" stroke="#333" strokeWidth="1.300" /><path d="M3 2V17M3 10 10 18 15 16 14 13 26 14M10 18V24" stroke="#333" /></>),
  bend: (<><path d="M3 6C16 2 22 10 21 24" stroke="#555" strokeWidth="8" /><path d="M3 6C16 2 22 10 21 24" stroke="#f4f4f4" strokeWidth="6" /><path d="M3 6C16 2 22 10 21 24" stroke="#c0456a" strokeWidth="1.500" /></>),
  cone: (<><path d="M2 19 6 10 20 10 26 18 13 25Z" fill="#fff" stroke="#333" /><path d="M3 8 11 3 19 7 8 10ZM6 10 12 14 20 10" fill="none" stroke="#e22b35" /><path d="M4 17 12 14 24 17M12 14V24" fill="none" stroke="#333" /></>),
  ball: (<><path d="M2 8H14V22H2Z" fill="#8c8c80" stroke="#333" /><circle cx="15" cy="10" r="8" fill="#bcc4dc" stroke="#222" /><path d="M8 14 21 12 23 22 11 25Z" fill="#fff" stroke="#222" /><path d="M15 6V20" stroke="#e22b35" strokeWidth="2" /></>),
  polyDot: (<><path d="M3 5 14 3 23 12 14 22 3 23" fill="#fff" stroke="#333" /><path d="M3 12 15 13M14 3 15 13 14 22" stroke="#333" /><Dots points={[[15, 13]]} r={2.4} /><path d="M19 12 26 17 20 20Z" fill="#111" /></>),
  corner1: (<><path d="M26 4H14M4 24V14" stroke="#222" strokeWidth="2" /><path d="M15 4Q4 4 4 14" fill="none" stroke="#e22b35" strokeWidth="2" /></>),
  corner2: (<><path d="M26 3H16M4 24V14" stroke="#222" strokeWidth="1.500" /><path d="M16 3 4 15" stroke="#e22b35" strokeWidth="1.800" /><path d="M4 13V3H15" stroke="#888" fill="none" strokeDasharray="2 2" /></>),
  angle: (<><path d="M7 18 24 5M7 18H26" stroke="#444" strokeWidth="1.500" /><path d="M2 22 14 13M7 18H16" stroke="#e22b35" strokeWidth="1.500" /><Dots points={[[7, 18]]} r={2.4} /></>),
  polyRed: (<><path d="M4 14 7 6 16 3 27 7V20H11Z" fill="#fff" stroke="#333" strokeWidth="1.200" /><path d="M2 10 4 17 10 24 26 25" fill="none" stroke="#e22b35" strokeWidth="2" /></>),
  bandBox: (<><path d="M1 24 5 18V24Z" fill="#777" /><path d="M5 8 11 3H26V24L5 25Z" fill="#fff" stroke="#333" strokeWidth="1.300" /><path d="M5 8 13 10 26 7M13 10V24M21 9V23" fill="none" stroke="#333" /><path d="M2 16 10 19 18 15 26 18" fill="none" stroke="#e22b35" strokeWidth="1.800" /></>),
  cornerSheet: (<><path d="M6 3 2 17 19 24 25 19 12 6Z" fill="#eee" stroke="#444" /><path d="M6 3Q18 11 18 23" fill="none" stroke="#e22b35" strokeWidth="1.700" /><path d="M5 15Q12 14 18 21" fill="none" stroke="#46c" /></>),
  columns1: (<><path d="M4 9 9 8V23L4 25ZM12 7 17 6V20L12 22ZM20 4 25 3V17L20 19Z" fill="#fff" stroke="#444" strokeWidth="1.500" /><path d="M1 22 4 20M9 21 12 19M17 18 20 16" stroke="#999" strokeWidth="2" /></>),
  columns2: <path d="M3 9 6 8V18L3 19ZM9 5 12 4V24L9 25ZM15 4 18 3V22L15 23ZM21 9 24 8V19L21 20ZM6 12 9 11V20L6 21ZM18 11 21 10V22L18 23Z" fill="#ddd" stroke="#333" strokeWidth="1.200" />,
  columns3: (<><path d="M3 16Q3 25 14 25 25 25 25 16" fill="#ddd" stroke="#444" /><path d="M4 9V20M8 6V18M12 4V17M16 4V17M20 6V18M24 9V20" stroke="#444" strokeWidth="2.400" /></>),
  wall: (<><path d="M2 20 8 14V24Z" fill="#888" /><path d="M8 8Q13 12 17 7L25 3V18L17 21Q12 21 8 24Z" fill="#fff" stroke="#333" strokeWidth="1.200" /></>),
  wedge: (<><path d="M2 14 17 5V12L9 15 17 19V25Z" fill="#999" /><path d="M17 6 25 3V25L17 19Z" fill="#ddd" stroke="#333" strokeWidth="1.300" /><path d="M21 11V17" stroke="#111" strokeWidth="2" /></>),
  shelves: (<><path d="M3 3H12V25L3 20Z" fill="#777" /><path d="M8 4 25 8M8 10 25 14M8 16 25 20M8 22 20 26" stroke="#333" strokeWidth="2" /><path d="M12 3V25" stroke="#333" /></>),
  ramp: (<><path d="M2 23 19 4 26 5 12 24Z" fill="#999" stroke="#777" /><path d="M5 20 13 23M9 15 17 18M13 11 21 13M17 6 24 8" stroke="#eee" /></>),
  stairs1: <path d="M2 5H7V8H12V11H16V13H26L13 16V18H9V21H5V24H2" fill="none" stroke="#222" strokeWidth="1.700" strokeLinejoin="bevel" />,
  stairs2: <path d="M3 4H7V7H12V10H16V13H26M3 24H7V21H12V18H16V15H26" fill="none" stroke="#444" strokeWidth="1.500" />,
  stairs3: <path d="M3 4 16 12H26M3 24H6V21H10V18H13V16H26M3 9 14 15M16 12V16" fill="none" stroke="#222" strokeWidth="1.500" />,
  spiral: (<><path d="M3 24V9Q14-3 24 9V25H12V15Z" fill="#999" stroke="#555" /><path d="M3 12 12 14M4 7 13 13M11 3 14 13M20 5 15 13M24 11 15 15M12 18H24M12 22H24" stroke="#444" strokeWidth="1.200" /></>),
  escalator: (<><path d="M2 25 17 3H25V12L14 25Z" fill="#888" stroke="#333" /><path d="M6 24 20 4M10 25 24 6M13 25 25 10" stroke="#ddd" strokeWidth="1.200" /></>),
  frame: (<><path d="M3 22 9 18 16 21 9 25Z" fill="#999" stroke="#555" /><path d="M8 6 22 4V17L8 20Z" fill="#bbb" stroke="#444" strokeWidth="1.500" /><path d="M11 9 19 7V15L11 16Z" fill="#fff" stroke="#444" /></>),
  doorFrame: <path d="M2 19 9 23 12 21 9 18V9L19 7V24L23 22V3L7 6V18" fill="#bbb" stroke="#444" />,
  windowGrid: (<><path d="M2 14 7 10V25H2Z" fill="#888" /><path d="M6 4 24 3V24L6 25Z" fill="#bbb" stroke="#333" strokeWidth="1.500" /><path d="M10 4V25M15 4V25M20 4V24M6 9H24M6 14H24M6 19H24" stroke="#333" strokeWidth="1.500" /></>),
  weave: <path d="M2 8 10 4M2 13 18 4M2 19 25 5M4 24 26 10M11 25 26 16M18 25 26 21M4 4 10 11M10 4 20 15M17 4 26 14M3 12 14 25M11 14 20 25" stroke="#333" strokeWidth="1.800" />,
  louver: (<><path d="M2 3H12L10 14 13 25H2Z" fill="#888" /><path d="M7 3 16 8 26 4M8 9 17 14 26 10M9 15 18 20 26 16M11 21 18 25 26 21" fill="none" stroke="#444" strokeWidth="1.800" /></>),
  curtains: (<><path d="M5 3V24M12 3V23M19 3V22" stroke="#444" strokeWidth="1.500" /><path d="M7 3V23M14 3V22M21 3V21" stroke="#bbb" strokeWidth="2" /><path d="M2 25 26 22" stroke="#777" strokeWidth="2" /></>),
  vaultA: (<><path d="M2 14 13 3H26V25H12Z" fill="#aaa" stroke="#333" /><path d="M5 14 16 7 12 20ZM16 4 25 22M22 3 15 25M8 20 26 13" fill="none" stroke="#222" strokeWidth="2" /></>),
  vaultB: (<><path d="M2 14 13 3H26L20 13 26 25H12Z" fill="#eee" stroke="#777" /><path d="M5 14 16 7 12 20ZM16 14 25 22M22 3 15 10M14 20 20 25" fill="none" stroke="#333" strokeWidth="2.200" /></>),
  fan: (<><path d="M2 17 22 3H26V25H23L19 18 18 24Z" fill="#888" /><path d="M4 17 24 5M8 19 25 9M12 22 26 14" stroke="#ddd" strokeWidth="1.200" /></>),
  lattice: <path d="M2 7 14 4 26 4M6 25 11 4M13 25 17 4M20 25 23 4M2 9 14 24M6 4 20 17M14 12 2 22M26 8 14 19" fill="none" stroke="#333" strokeWidth="2.200" />,
  roof: (<><path d="M2 14 14 3 26 14 18 24 16 17 8 23Z" fill="#fff" stroke="#333" /><path d="M8 11H14V21L8 17ZM14 11 20 10V20" fill="#ccc" stroke="#555" /></>),
  gem: (
    <>
      <path d="M14 1 26 8V20L14 27 2 20V8Z" fill="#a30d14" />
      <path d="M14 3 18 8 24 8 22 14 24 20 18 20 14 25 10 20 4 20 6 14 4 8 10 8Z" fill="#cf1c24" stroke="#7a0a10" strokeWidth=".6" />
      <path d="M14 8 20 11V17L14 20 8 17V11Z" fill="#ee6450" stroke="#b01c20" />
      <path d="M14 1V8M26 8 20 11M26 20 20 17M14 27V20M2 20 8 17M2 8 8 11" stroke="#7a0a10" strokeWidth=".6" />
    </>
  ),
  tag: (<><path d="M7 14 18 3 27 4 26 12 14 23 7 21Z" fill="#8f917f" stroke="#333" strokeWidth="1.200" /><path d="M2 26 10 18" stroke="#a11d2c" strokeWidth="2" /><circle cx="11" cy="18" r="2" fill="#f1e8c0" stroke="#444" /></>),
  components: (<><path d="M8 10 13 7 18 10V15L13 18 8 15ZM4 17 10 15 14 18V23L8 24 4 22ZM14 18 20 15 24 18V23L17 25Z" fill="#8b8b7c" stroke="#222" /><path d="M2 8 15 2 26 6V22L13 27 2 23ZM2 8 13 11 26 6M13 11V27" fill="none" stroke="#2f97d8" strokeWidth="1.500" /></>),
  protractor: (<><path d="M3 23C1 10 10 3 25 4L24 8 7 24Z" fill="#e2d436" stroke="#222" strokeWidth="1.500" /><path d="M7 18Q8 9 18 8Z" fill="#f0f0f0" stroke="#222" /></>),
  axes: (<><path d="M13 3V14" stroke="#1c4fc0" strokeWidth="3" /><path d="M9 8 13 1 17 8Z" fill="#1c4fc0" /><path d="M13 15 23 9" stroke="#2a9a3c" strokeWidth="2" /><path d="M13 15 22 21" stroke="#c81e2a" strokeWidth="2" /><path d="M13 15 3 9M13 15 4 20M13 15V26" stroke="#89a" strokeDasharray="2 2" /><path d="M20 8 26 7 23 12Z" fill="#2a9a3c" /><path d="M19 22 25 23 22 17Z" fill="#c81e2a" /></>),
  text3d: <path d="M4 25 9 4 16 2 25 20 20 25 17 19 12 20 11 26ZM12 15 15 14 13 9Z" fill="#55564b" stroke="#111" strokeWidth="1.200" />,
  person: (<><circle cx="14" cy="5" r="2.500" fill="#fff" stroke="#444" /><path d="M11 9H17L18 18H16V22H12V18H10Z" fill="#fff" stroke="#333" /><path d="M9 25 14 21 19 25M9 22H19" stroke="#e22b35" fill="none" /></>),
  eye: (<><path d="M3 13Q14 4 25 13 14 21 3 13Z" fill="#eee" stroke="#222" strokeWidth="1.600" /><path d="M2 10Q13 1 26 10" stroke="#777" fill="none" strokeWidth="2" /><circle cx="14" cy="13" r="4.500" fill="#111" /><circle cx="13" cy="12" r="1.300" fill="#fff" /><path d="M5 19Q14 23 22 18" stroke="#aaa" fill="none" /></>),
  feet: (<><path d="M5 6C9 4 12 8 11 16L5 17C3 12 2 8 5 6ZM5 19 11 18C12 24 7 25 5 22ZM19 3C24 2 26 6 24 10L21 16 15 14C15 8 16 4 19 3ZM15 16 20 18C19 23 14 24 14 20Z" fill="#111" /></>),
  section: (<><path d="M14 4 27 14 14 24ZM14 4 8 8M14 24 8 20" fill="#111" stroke="#111" /><circle cx="14" cy="14" r="8" fill="#fff" stroke="#222" /><path d="M1 14H27" stroke="#111" strokeWidth="1.500" /><path d="M11 18 12 16 14 18M16 17H18V19H16ZM13 8H16V11H13Z" stroke="#444" /></>),
};

// "|" is a divider, a trailing "+" is a tool with its own drop-down, "*" marks the active tool
const toolbarRows: string[][][] = [
  [
    ["find", "|", "select+*", "|", "eraser", "pencil+", "arc+", "rect+", "|", "pushpull", "offset", "move", "rotate", "scale", "|", "tape", "text", "paint", "|", "orbit", "pan", "zoom", "zoomext", "|", "warehouse", "waves", "stack", "|", "wavesGear", "|", "account+"],
    ["fredo1", "|", "fredo2", "|", "fredo3", "|", "fredo4", "fredo5", "|", "fredo6", "|", "fredo7", "|", "fredo8", "fredo9", "|", "fredo10"],
  ],
  [
    ["cornerGold", "cornerBlue", "cornerGreen"],
    ["jpp", "|", "jppE", "jppJ", "jppR", "jppV", "jppN", "jppX", "jppF"],
    ["shell"],
    ["mirror1", "mirror2", "mirror3"],
    ["curviloft", "skinning"],
    ["iso", "top", "front", "right", "back", "left"],
    ["f6"],
    ["skin", "|", "bagPencil", "|", "bagRect", "bagCircle", "bagHex", "bagEllipse", "bagPara", "bagArc", "bagCircle2", "bagPie", "|", "bagBlue", "bagLoops", "|", "bagArrow", "bagErase"],
    ["contours", "scratch", "|", "smoove", "stamp", "drape", "detail", "flip"],
  ],
  [
    ["sheetHash", "sheetBlue", "sheetGold", "sheetBlue", "sheetRed", "sheetWhite", "pipeGold", "quad", "stripes", "flag", "woodL", "tubeGrey", "channel", "arcDots", "crossRed", "crossGreen", "crossBlue", "drop", "dropHash", "pyramids", "loop", "loopX", "loopBlue", "moveBlue", "woodBox", "hook", "greenBoxes", "cubePaste", "cubeRotate", "cubeRotate2", "goldBlock", "fourCubes", "glass", "tileDiag", "tile4", "tileGrid", "crosses", "arcSquares", "cubes3"],
  ],
  [
    ["paper", "arcDots", "boxRed", "lineOnly", "hexDash", "slabArrow", "bend", "cone", "ball", "polyDot", "corner1", "corner2", "angle", "polyRed", "bandBox", "cornerSheet", "columns1", "columns2", "columns3", "wall", "wedge", "shelves", "ramp", "stairs1", "stairs2", "stairs3", "spiral", "escalator", "frame", "doorFrame", "windowGrid", "weave", "louver", "curtains", "vaultA", "vaultB", "fan", "lattice", "roof"],
  ],
];

const sideTools: string[][] = [
  ["select*", "lasso", "paint", "eraser", "components", "tag"],
  ["pencil", "freehand", "rect", "rotrect", "circle", "polygon", "arc2", "arc", "arc3", "pie"],
  ["move", "pushpull", "rotate", "followme", "scale", "offset"],
  ["tape", "dimension", "protractor", "text", "axes", "text3d"],
  ["orbit", "pan", "zoom", "zoomwin", "zoomext", "previous"],
  ["person", "eye", "feet", "section"],
  ["warehouse", "waves", "stack", "wavesGear"],
];

const menus = ["File", "Edit", "View", "Camera", "Draw", "Tools", "Window", "Extensions", "Help"];

const Icon = ({ name }: { name: string }) => (
  <svg viewBox="0 0 28 28" className="size-7 shrink-0 overflow-visible" fill="none" aria-hidden="true">
    {icons[name]}
  </svg>
);

const Tool = ({ item }: { item: string }) => {
  if (item === "|") {
    return <div className="h-[30px] w-2 pl-0.5"><div className="h-full w-px bg-[#777]" /></div>;
  }
  const name = item.replace(/[+*]/g, "");
  const active = item.includes("*");
  const split = item.includes("+");
  return (
    <div
      className={`flex h-[34px] items-center ${split ? "w-14 pl-1" : "w-[34px] justify-center"} ${
        active ? "bg-[#c4dff5] outline outline-1 -outline-offset-1 outline-[#8fc4ee]" : ""
      }`}
    >
      <button aria-label={name} className="shrink-0">
        <Icon name={name} />
      </button>
      {split && (
        <button aria-label={`${name} options`} className={`ml-[5px] p-0.5 ${active ? "bg-[#eef5fb]" : ""}`}>
          <svg viewBox="0 0 12 10" className="h-2.5 w-3">
            <path d="M0 1H12L6 8Z" fill="#111" />
          </svg>
        </button>
      )}
    </div>
  );
};

const Toolbar = ({ items, grip }: { items: string[]; grip: boolean }) => (
  <div className="flex h-[38px] items-center border-r border-b border-[#a8a8a8] bg-[#f3f3f3] pr-px">
    <div className="flex w-2.5 justify-center">
      {grip && <div className="h-8 border-l-2 border-dotted border-[#b4b4b4]" />}
    </div>
    {items.map((item, i) => (
      <Tool key={i} item={item} />
    ))}
  </div>
);

const Palette = () => (
  <div className="absolute top-[75px] left-[118px] z-10 w-[41px] border border-r-2 border-b-2 border-[#9a9fa6] bg-[#f4f4f4] shadow">
    <div className="flex h-6 items-center justify-between bg-[#9db8d9] px-0.5 text-xs font-bold">
      <span>A...</span>
      <button aria-label="Close palette" className="mr-0.5 h-3 w-3 bg-[#c75050] text-[10px] leading-3 text-white">
        x
      </button>
    </div>
    <button aria-label="Ruby" className="flex h-9 w-full items-center justify-center">
      <Icon name="gem" />
    </button>
  </div>
);

const Model = () => (
  <svg viewBox="73 196 1845 814" preserveAspectRatio="xMidYMid slice" className="absolute inset-0 h-full w-full" fill="none">
    <path d="M910 196 941 972" stroke="#2236b0" strokeWidth="1.200" />
    <path d="M941 972V1010" stroke="#2a3ea8" strokeDasharray="1 3" />
    <path d="M1761 196 1020 898M969 946 941 972" stroke="#1eae1e" strokeWidth="1.200" />
    <path d="M941 972 903 1010" stroke="#35a545" strokeDasharray="1 3" />
    <path d="M73 376 941 972" stroke="#a5402c" strokeWidth="1.200" strokeDasharray="1.500 3" />
    <path d="M941 972 995 1010" stroke="#c82818" strokeWidth="1.400" />

    <path d="M956 222 1005 242 1029 217 1018 960 1001 997 969 967Z" fill="#4f2d12" stroke="#1c140c" />
    <path d="M956 222 1029 217 1005 242Z" fill="#5b3415" stroke="#150d06" strokeDasharray="3 1" />
    <path d="M956 222 1005 242V251L956 232ZM1005 242 1029 217V229L1005 251Z" fill="#65391a" stroke="#1c1108" strokeWidth=".8" />

    <path d="M978 241 1001 251 1000 622 982 573Z" fill="#d1cbb0" stroke="#20150c" strokeWidth=".8" />
    <path d="M965 685 982 725 983 927 968 847Z" fill="#d3c9b0" stroke="#20150c" strokeWidth=".8" />
    <path d="M1017 240 1029 229 1022 662 1013 650Z" fill="#a7a3a4" stroke="#33302e" strokeWidth=".8" />
    <path d="M1002 792 1011 801 1011 898 1002 933Z" fill="#a59c96" stroke="#20150c" strokeWidth=".8" />

    <path d="M963 235 968 600 970 682M972 239 975 573 994 622V988M970 682 988 728V983" stroke="#1a0f07" strokeWidth="2.400" />
    <path d="M963 235 968 600 970 682M972 239 975 573 994 622V988M988 728V983" stroke="#bcb095" strokeWidth=".8" />
    <path d="M970 682 988 728" stroke="#d3c9b0" strokeDasharray="2 2" />
    <path d="M966 237 970 560M984 730 984 979" stroke="#1a0f07" />
    <path d="M1003 251 1001 997" stroke="#120a04" strokeWidth="1.600" />
    <path d="M1004 251 1002 780" stroke="#74401c" strokeWidth="1.200" />
    <path d="M1008 246 1005 780M1012 243 1009 645M1015 241 1012 640M1014 800 1010 975M1018 680 1014 960" stroke="#120a04" strokeWidth="1.500" />
    <path d="M1009 250 1006 480M1012 244 1010 480" stroke="#968877" strokeWidth=".7" strokeDasharray="14 12" />
    <path d="M1010 655 1018 671V780M1005 783 1014 793" stroke="#120a04" strokeWidth="2.500" />
    <path d="M1010 655 1018 671M1005 783 1014 793" stroke="#b5a68d" strokeWidth=".8" />
  </svg>
);

const TaskApp = ({ label, open, active, children }: { label: string; open?: boolean; active?: boolean; children: React.ReactNode }) => (
  <button aria-label={label} className={`flex h-10 w-12 flex-col items-center ${active ? "bg-[#4a4a4c]" : ""}`}>
    <svg viewBox="0 0 24 24" className="mt-2 size-6">
      {children}
    </svg>
    {open && <span className={`mt-1.5 h-0.5 bg-[#76b9ed] ${active ? "w-12" : "w-10"}`} />}
  </button>
);

const SketchUpMark = () => (
  <>
    <path d="M0 0H24V24H0Z" fill="#eef5fb" />
    <path d="M4 8 12 3 20 8V16L12 21 4 17V14L10 17V15L4 12Z" fill="#1b6fae" />
    <path d="M8 9 12 7 16 9V15L12 18M8 9 13 12V19M5 11 11 15" stroke="#d5e8f6" fill="none" />
  </>
);

const App = () => {
  return (
    <div className="flex min-h-screen flex-col bg-[#f0f0f0] font-['Open_Sans','Noto_Sans',sans-serif] text-xs text-black">
      <header className="bg-white">
        <div className="flex h-[22px] items-center justify-between">
          <div className="flex items-center gap-1 pl-0.5">
            <svg viewBox="0 0 24 24" className="size-4">
              <SketchUpMark />
            </svg>
            <h1>light pole - SketchUp Pro 2022</h1>
          </div>
          <div className="flex">
            <button aria-label="Minimize" className="flex h-5 w-[45px] items-center justify-center">
              <svg viewBox="0 0 10 10" className="size-2.5"><path d="M0 5.500H10" stroke="#000" /></svg>
            </button>
            <button aria-label="Restore" className="flex h-5 w-[45px] items-center justify-center">
              <svg viewBox="0 0 10 10" className="size-2.5" fill="none" stroke="#000"><path d="M.5 2.500H7.500V9.500H.5ZM2.500 2.500V.5H9.500V7.500H7.500" /></svg>
            </button>
            <button aria-label="Close" className="flex h-5 w-12 items-center justify-center">
              <svg viewBox="0 0 10 10" className="size-2.5" stroke="#000"><path d="M0 0 10 10M10 0 0 10" /></svg>
            </button>
          </div>
        </div>
        <nav className="flex h-[21px] items-center gap-3 pl-[7px]">
          {menus.map((menu) => (
            <button key={menu}>{menu}</button>
          ))}
        </nav>
      </header>

      <div className="relative">
        {toolbarRows.map((row, r) => (
          <div key={r} className="flex">
            {row.map((items, i) => (
              <Toolbar key={i} items={items} grip={!(r === 1 && i === 0)} />
            ))}
          </div>
        ))}
        <Palette />
      </div>

      <div className="flex flex-1">
        <aside className="w-[74px] shrink-0 border-r-2 border-[#8c8c8c] pt-[42px]">
          <div className="mx-0.5 mb-1 border-t-2 border-dotted border-[#b4b4b4]" />
          {sideTools.map((group, i) => (
            <div key={i} className={`mx-0.5 grid grid-cols-2 ${i > 0 ? "mt-1 border-t border-[#888] pt-[3px]" : ""}`}>
              {group.map((item) => (
                <Tool key={item} item={item} />
              ))}
            </div>
          ))}
        </aside>
        <main className="relative mr-0.5 flex-1 overflow-hidden border-t-2 border-[#6d7a69] bg-[#9cbc92]">
          <Model />
        </main>
      </div>

      <footer className="flex h-[29px] items-center border-t border-[#fafafa] pt-1 pr-1 text-[13px]">
        <svg viewBox="0 0 62 20" className="h-5 w-[62px]" fill="none" stroke="#999">
          <circle cx="13" cy="9" r="7" />
          <path d="M13 4Q17 6 14 12H12Q9 6 13 4Z" fill="#999" />
          <circle cx="43" cy="9" r="7" />
          <path d="M43 8V14" strokeWidth="3" />
          <circle cx="43" cy="5" r="1" fill="#999" />
        </svg>
        <span className="h-3 w-px bg-[#888]" />
        <p className="ml-2.5">Click or drag to select objects. Shift = Add/Subtract. Ctrl = Add. Shift + Ctrl = Subtract.</p>
        <span className="ml-auto h-3 w-px bg-[#888]" />
        <label htmlFor="measurements" className="mx-2.5">Measurements</label>
        <input id="measurements" className="h-6 w-[200px] border border-[#aab6cf] bg-[#f0f0f0] px-1" />
      </footer>

      <div className="flex h-10 items-center bg-[#1c1c1e] text-[13px] text-white">
        <button aria-label="Start" className="flex h-10 w-12 items-center justify-center">
          <svg viewBox="0 0 16 16" className="size-4" fill="#fff">
            <path d="M0 2 7 1V7.500H0ZM8 1 16 0V7.500H8ZM0 8.500H7V15L0 14ZM8 8.500H16V16L8 15Z" />
          </svg>
        </button>
        <div className="flex h-10 w-72 items-center border-y border-[#c9c9c9] bg-[#f3f3f3] pl-3 text-[#333]">
          <svg viewBox="0 0 18 18" className="size-[18px]" fill="none" stroke="#222" strokeWidth="1.300">
            <circle cx="11" cy="7" r="5.500" />
            <path d="M7 11 1 17" />
          </svg>
          <input
            aria-label="Search"
            placeholder="Type here to search"
            className="ml-2.5 w-0 flex-1 bg-transparent text-sm placeholder:text-[#333]"
          />
          <svg viewBox="0 0 74 38" className="h-[38px] w-[74px]">
            <path d="M4 9Q12 5 18 7 28 4 38 9Z" fill="#ecc6b0" />
            <path d="M19 22Q20 14 28 15 34 13 40 19 46 22 46 30H19Z" fill="#5c8f2c" />
            <path d="M6 22H17V38H6ZM17 25H46V38H17Z" fill="#f1c28c" />
            <path d="M17 25H30V28H17ZM34 25H46V28H34Z" fill="#a84e58" />
            <path d="M4 22 7 13 10 22ZM9 22 14 12 18 22Z" fill="#cf5a32" />
            <path d="M56 20H68V38H56Z" fill="#b98f9a" />
            <path d="M54 24 59 4 64 24ZM62 22 67 16 71 22Z" fill="#5a5583" />
            <path d="M41 24H54V38H41Z" fill="#e39a80" />
            <path d="M46 3H47V12H46Z" fill="#6b3a33" />
            <path d="M38 26 43 13 46 8 50 13 55 26Z" fill="#d0502c" />
            <path d="M47 9 50 13 55 26H47Z" fill="#b03a28" />
            <path d="M44 30H46V34H44ZM50 30H52V34H50ZM9 26H11V30H9Z" fill="#7c3b34" />
            <path d="M20 31H23V35H20ZM27 31H30V35H27ZM34 31H37V35H34Z" fill="#a8663c" />
            <circle cx="66" cy="32" r="9" fill="#7aa72c" />
            <path d="M0 38Q3 29 10 32T24 35 34 38Z" fill="#8fb53a" />
          </svg>
        </div>
        <button aria-label="Task view" className="flex h-10 w-[51px] items-center pl-[15px]">
          <svg viewBox="0 0 18 18" className="size-[18px]" fill="none" stroke="#fff" strokeWidth="1.300">
            <path d="M1 1V3H12V1M1 5.500H12V12.500H1ZM1 17V15H12V17M15.500 1V17" />
            <path d="M14 5H17V8H14Z" fill="#fff" />
          </svg>
        </button>
        <div className="flex gap-px">
          <TaskApp label="Calculator">
            <path d="M3 0H21V24H3Z" fill="#6a7075" />
            <path d="M5 2H19V6H5Z" fill="#3cc3ee" />
            <path d="M5 8H9V12H5ZM10 8H14V12H10ZM15 8H19V12H15ZM5 13H9V17H5ZM10 13H14V17H10ZM5 18H9V22H5ZM10 18H14V22H10Z" fill="#cfd5da" />
            <path d="M15 13H19V22H15Z" fill="#174e9c" />
          </TaskApp>
          <TaskApp label="File Explorer" open>
            <path d="M1 3H9L11 5H23V21H1Z" fill="#e0a01c" />
            <path d="M1 7H23V21H1Z" fill="#fcd462" />
            <path d="M5 13H19V22H15V18H9V22H5Z" fill="#3c93d0" />
          </TaskApp>
          <TaskApp label="AutoCAD" open>
            <path d="M0 0H24V24H0Z" fill="#f8e9e6" />
            <path d="M3 21 10 3H15L20 20 16 21 14 16 9 17 7 21ZM10 13 13 12 12 8Z" fill="#c41e2c" />
          </TaskApp>
          <TaskApp label="3ds Max">
            <path d="M2 2 6 0H23V22L19 24H2Z" fill="#1f7f95" />
            <path d="M3 1H22V17H3Z" fill="#3fa9c2" />
            <text x="8" y="13" fontSize="13" fontWeight="bold" fill="#fff">3</text>
            <text x="5" y="23" fontSize="6" fontWeight="bold" fill="#fff">MAX</text>
          </TaskApp>
          <TaskApp label="SketchUp" open active>
            <SketchUpMark />
          </TaskApp>
          <TaskApp label="Microsoft Edge" open>
            <circle cx="12" cy="12" r="12" fill="#1a78cc" />
            <path d="M1 9Q4 0 13 0 24 1 24 10 22 16 16 15 14 14 15 12 15 7 9 7 4 7 1 12Z" fill="#35c6b4" />
            <path d="M13 0Q24 1 24 10 22 16 16 15 20 8 13 0Z" fill="#62d45a" />
            <path d="M9 12Q8 20 18 20 21 19 22 18 18 24 12 24 4 20 5 14 6 11 9 12Z" fill="#134f9c" />
            <path d="M15 12Q13 14 16 16 20 17 23 14 20 19 15 19 10 17 10 13 12 9 15 12Z" fill="#1c1c1e" />
          </TaskApp>
        </div>

        <div className="ml-auto flex items-center pr-1">
          <svg viewBox="0 0 26 26" className="size-[26px]">
            <path d="M16 1Q25 7 22 18L15 16Q19 8 16 1Z" fill="#f3a92c" />
            <path d="M5 24Q0 22 2 17 4 14 7 15 8 9 14 10 19 11 19 15 24 15 24 20 24 24 20 24Z" fill="#d5deee" />
          </svg>
          <button className="ml-1.5 flex gap-2.5 text-sm"><span>31°C</span><span>Smoke</span></button>
          <svg viewBox="0 0 12 8" className="ml-6 h-2 w-3" fill="none" stroke="#fff" strokeWidth="1.300"><path d="M1 7 6 1 11 7" /></svg>
          <svg viewBox="0 0 16 18" className="ml-3 h-[18px] w-4" fill="none" stroke="#fff" strokeWidth="1.200">
            <path d="M3 5H11V13H3ZM11 8 14 6V12L11 10M4 2Q7 0 10 2M4 16Q7 18 10 16" />
          </svg>
          <svg viewBox="0 0 16 16" className="ml-2 size-4" fill="none" stroke="#bbb" strokeWidth="1.200">
            <path d="M1 14Q2 3 14 3M5 14Q5 7 14 7M9 14Q9 10 14 10" />
            <circle cx="13" cy="13" r="1.500" fill="#fff" />
          </svg>
          <svg viewBox="0 0 18 16" className="ml-1.5 h-4 w-[18px]" fill="none" stroke="#fff" strokeWidth="1.200">
            <path d="M1 6H4L8 2V14L4 10H1ZM10 5Q12 8 10 11M12 3Q16 8 12 13M15 2Q19 8 15 14" />
          </svg>
          <span className="ml-2 text-xs">ENG</span>
          <div className="ml-3 w-14 text-center text-xs leading-[18px] whitespace-nowrap">
            <p>11:07 PM</p>
            <p>8/15/2023</p>
          </div>
          <button aria-label="Notifications" className="ml-3.5 flex h-10 w-9 items-center">
            <svg viewBox="0 0 26 26" className="mt-1 size-[26px]">
              <path d="M1 2H17V15H8L4 19V15H1Z" fill="#fff" />
              <path d="M4 5H14M4 8H14M4 11H10" stroke="#1c1c1e" strokeWidth="1.200" />
              <circle cx="17" cy="17" r="7.500" fill="#333" stroke="#888" />
              <text x="14" y="21" fontSize="11" fontWeight="bold" fill="#fff">4</text>
            </svg>
          </button>
          <span className="h-10 w-px bg-[#555]" />
        </div>
      </div>
    </div>
  );
};

export default App;
